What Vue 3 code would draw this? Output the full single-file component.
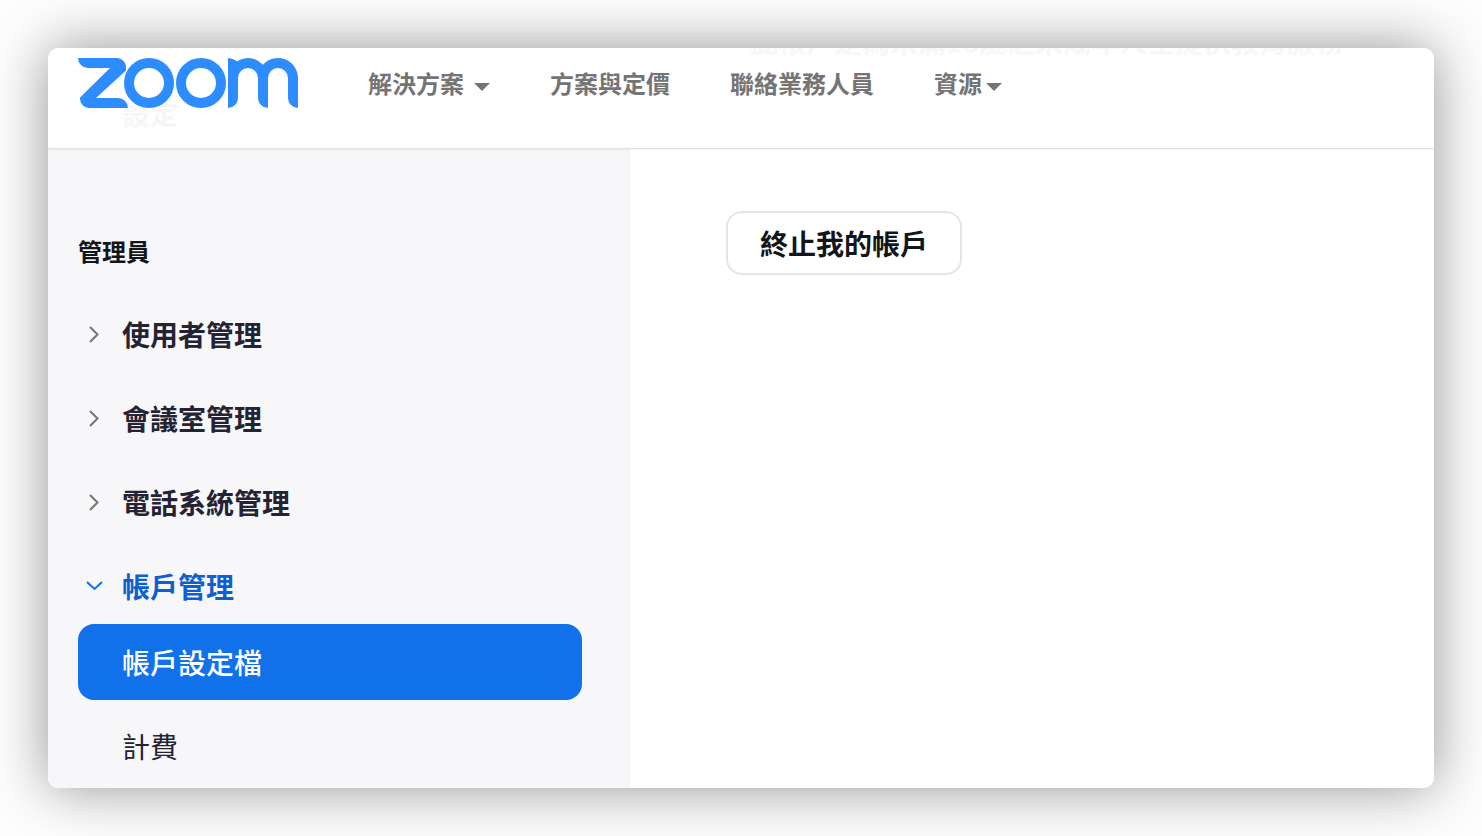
<script setup>
const navItems = [
  { label: '解決方案', menu: true, spaced: true },
  { label: '方案與定價' },
  { label: '聯絡業務人員' },
  { label: '資源', menu: true },
]

const groups = [
  { label: '使用者管理' },
  { label: '會議室管理' },
  { label: '電話系統管理' },
  {
    label: '帳戶管理',
    open: true,
    children: [{ label: '帳戶設定檔', active: true }, { label: '計費' }],
  },
]
</script>

<template>
  <div class="page">
    <div class="window">
      <header class="topbar">
        <span class="ghost ghost-setting" aria-hidden="true">設定</span>
        <span class="ghost ghost-notice" aria-hidden="true">此帳戶是為未滿18歲之未成年人士提供教育服務</span>
        <a class="logo" href="#" aria-label="Zoom">
          <svg width="220" height="50" viewBox="0 0 220 50" fill="#2d8cff" aria-hidden="true">
            <path d="M0 0H39A9 9 0 0 1 48 9V12.500L18 40H40A10 10 0 0 1 50 50H11A9 9 0 0 1 2 41V39.500L32 10H10A10 10 0 0 1 0 0Z" />
            <circle cx="71" cy="25" r="20" fill="none" stroke="#2d8cff" stroke-width="10" />
            <circle cx="123" cy="25" r="20" fill="none" stroke="#2d8cff" stroke-width="10" />
            <path d="M150 0A16 16 0 0 1 159 3.300A20 20 0 0 1 185 6.800A20 20 0 0 1 220 20V50A10 10 0 0 1 210 40V20A10 10 0 0 0 190 20V50A10 10 0 0 1 180 40V20A10 10 0 0 0 160 20V40A10 10 0 0 1 150 50Z" />
          </svg>
        </a>
        <nav class="nav">
          <a
            v-for="item in navItems"
            :key="item.label"
            href="#"
            class="nav-link"
            :class="{ spaced: item.spaced }"
          >
            {{ item.label }}
            <svg v-if="item.menu" class="caret" width="16" height="8" viewBox="0 0 16 8" aria-hidden="true">
              <path d="M0 0H16L8 8Z" fill="currentColor" />
            </svg>
          </a>
        </nav>
      </header>

      <div class="body">
        <aside class="sidebar">
          <h2 class="heading">管理員</h2>
          <ul class="list">
            <li v-for="group in groups" :key="group.label">
              <button type="button" class="group" :class="{ open: group.open }" :aria-expanded="!!group.open">
                <svg class="chevron" width="18" height="18" viewBox="0 0 18 18" fill="none" stroke="currentColor" stroke-width="2" aria-hidden="true">
                  <path v-if="group.open" d="M2 5L9.500 12L17 5" />
                  <path v-else d="M5 2L12.500 9.500L5 17" />
                </svg>
                {{ group.label }}
              </button>
              <ul v-if="group.children" class="list">
                <li v-for="child in group.children" :key="child.label">
                  <a href="#" class="child" :class="{ active: child.active }">{{ child.label }}</a>
                </li>
              </ul>
            </li>
          </ul>
        </aside>
        <main class="content">
          <button type="button" class="terminate">終止我的帳戶</button>
        </main>
      </div>
    </div>
  </div>
</template>

<style>
body {
  margin: 0;
  background: #fdfdfd;
}
</style>

<style scoped>
* {
  box-sizing: border-box;
}

.page {
  display: flex;
  min-height: 100vh;
  padding: 48px;
  font-family: "Noto Sans CJK TC", sans-serif;
}

.window {
  display: flex;
  flex: 1;
  flex-direction: column;
  border-radius: 10px;
  overflow: hidden;
  background: #fff;
  box-shadow: 0 0 56px rgba(0, 0, 0, 0.42);
}

.topbar {
  position: relative;
  display: flex;
  align-items: flex-start;
  gap: 70px;
  min-height: 101px;
  padding: 10px 30px 0;
  border-bottom: 1px solid #e3e3e5;
  box-shadow: 0 1px 2px rgba(0, 0, 0, 0.06);
  z-index: 1;
}

.logo {
  position: relative;
  display: block;
}

.logo svg {
  display: block;
}

.nav {
  display: flex;
  gap: 60px;
  padding-top: 7px;
}

.nav-link {
  display: flex;
  align-items: center;
  gap: 4px;
  color: #747474;
  font-size: 24px;
  font-weight: 700;
  line-height: 36px;
  text-decoration: none;
  white-space: nowrap;
}

.nav-link.spaced {
  gap: 10px;
}

.caret {
  margin-top: 8px;
}

.ghost {
  position: absolute;
  font-size: 28px;
  font-weight: 700;
  line-height: 40px;
  white-space: nowrap;
}

.ghost-setting {
  left: 74px;
  top: 45px;
  color: #f6f6f8;
}

.ghost-notice {
  left: 702px;
  top: -27px;
  color: #f7f7f7;
}

.body {
  display: flex;
  flex: 1;
}

.sidebar {
  width: 42%;
  padding: 84px 48px 4px 30px;
  background: #f7f7fa;
}

.heading {
  margin: 0 0 27px;
  color: #131619;
  font-size: 24px;
  font-weight: 700;
  line-height: 36px;
}

.list {
  display: flex;
  flex-direction: column;
  gap: 8px;
  margin: 0;
  padding: 0;
  list-style: none;
}

.group {
  display: flex;
  align-items: center;
  gap: 19px;
  width: 100%;
  height: 76px;
  padding: 0 7px;
  border: 0;
  background: none;
  color: #232333;
  font-family: inherit;
  font-size: 28px;
  font-weight: 700;
  line-height: 40px;
  text-align: left;
}

.group.open {
  color: #0e5fd0;
}

.chevron {
  color: #747474;
}

.open .chevron {
  color: #0e71eb;
}

.child {
  display: block;
  padding: 18px 44px;
  border-radius: 16px;
  color: #232333;
  font-size: 28px;
  font-weight: 400;
  line-height: 40px;
  text-decoration: none;
}

.child.active {
  background: #1171eb;
  color: #fff;
  font-weight: 500;
}

.content {
  flex: 1;
  padding: 62px 96px;
}

.terminate {
  height: 64px;
  padding: 0 32px;
  border: 2px solid #e4e4ed;
  border-radius: 16px;
  background: #fff;
  color: #131619;
  font-family: inherit;
  font-size: 28px;
  font-weight: 700;
  line-height: 40px;
}
</style>
